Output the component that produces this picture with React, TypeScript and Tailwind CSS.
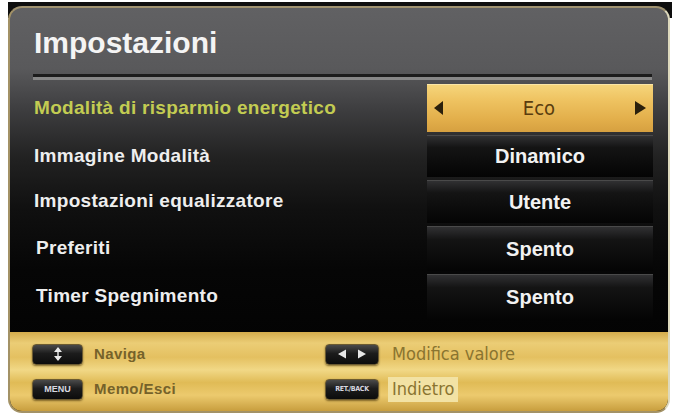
const sans = { fontFamily: '"Liberation Sans", Arial, sans-serif' };
const narrow = { fontFamily: '"DejaVu Sans Condensed", "DejaVu Sans", sans-serif', fontStretch: "condensed" };

const rows = [
  { label: "Modalità di risparmio energetico", value: "Eco", h: "h-[48px]", indent: "pl-[24px]", active: true },
  { label: "Immagine Modalità", value: "Dinamico", h: "h-[42px]", indent: "pl-[24px]" },
  { label: "Impostazioni equalizzatore", value: "Utente", h: "h-[43px]", indent: "pl-[24px]" },
  { label: "Preferiti", value: "Spento", h: "h-[45px]", indent: "pl-[26px]" },
  { label: "Timer Spegnimento", value: "Spento", h: "h-[45px]", indent: "pl-[26px]" },
];

function Key({ wide, children }: { wide?: boolean; children: React.ReactNode }) {
  return (
    <div
      className={`flex h-[21px] ${wide ? "w-[54px]" : "w-[51px]"} items-center justify-center rounded-[4px] border border-[#6b5a30] bg-[linear-gradient(#4a4a4a_0%,#1c1c1c_45%,#0c0c0c_100%)] shadow-[0_1px_2px_rgba(60,40,0,0.6)]`}
    >
      {children}
    </div>
  );
}

function Value({ text, active }: { text: string; active?: boolean }) {
  if (active) {
    return (
      <div className="flex h-full w-[226px] items-center justify-between bg-[linear-gradient(#f6d67c_0%,#eec260_35%,#e2ae4a_75%,#d6a040_100%)] px-[5px] shadow-[inset_0_1px_0_#fbe6a6]">
        <svg width="12" height="16" viewBox="0 0 12 16">
          <path d="M11 1 L2 8 L11 15 Z" fill="#2b200c" />
        </svg>
        <span className="text-[20px] leading-none text-[#5a3c0e]" style={narrow}>
          {text}
        </span>
        <svg width="14" height="16" viewBox="0 0 14 16">
          <path d="M1 1 L12 8 L1 15 Z" fill="#2b200c" />
        </svg>
      </div>
    );
  }
  return (
    <div className="flex h-full w-[226px] items-center justify-center bg-[linear-gradient(#333335_0%,#141414_30%,#040404_100%)] shadow-[inset_0_1px_0_#4a4a4a]">
      <span className="text-[20px] font-bold leading-none text-[#f2f2f2]" style={sans}>
        {text}
      </span>
    </div>
  );
}

export default function App() {
  return (
    <div className="h-[417px] w-[679px] bg-white pl-[8px] pt-[2px]">
      <div className="w-[664px] bg-[linear-gradient(#0e0e0e_0,#0e0e0e_16px,transparent_16px)] pr-[2px] pt-[4px]">
        <div className="flex h-[407px] w-[662px] flex-col overflow-hidden rounded-[14px] border-2 border-[#a39266] border-r-[#ddd9bd] border-t-[#a09270] bg-[linear-gradient(#616163_0%,#59595b_15%,#3e3e40_25%,#222222_37%,#101010_50%,#060606_65%,#000_100%)]">
          <h1 className="ml-[24px] mt-[20px] text-[30px] font-bold leading-[30px] text-[#f4f4f4]" style={sans}>
            Impostazioni
          </h1>
          <div className="ml-[23px] mt-[16px] w-[619px]">
            <div className="h-[3px] bg-[#1c1c1c]" />
            <div className="h-[3px] bg-[#878787]" />
          </div>
          <div className="mt-[4px] flex flex-col gap-[3px]">
            {rows.map((r) => (
              <div key={r.label} className={`flex ${r.h} items-center`}>
                <div
                  className={`flex-1 ${r.indent} text-[19px] font-bold tracking-[0.3px] ${r.active ? "text-[#c3cc52]" : "text-[#eeeeee]"}`}
                  style={sans}
                >
                  {r.label}
                </div>
                <div className="mr-[15px] h-full">
                  <Value text={r.value} active={r.active} />
                </div>
              </div>
            ))}
          </div>
          <div className="flex-1" />
          <div className="grid h-[79px] grid-cols-[293px_1fr] content-start gap-y-[11px] bg-[linear-gradient(#d4ac4c_0%,#ebcd76_14%,#e4c060_32%,#f1d886_48%,#e0bb56_64%,#ecca6e_80%,#c89e3e_100%)] pl-[22px] pt-[11px]">
            <div className="flex items-center gap-[11px]">
              <Key>
                <svg width="10" height="16" viewBox="0 0 10 16">
                  <path d="M5 1 L9 6 L1 6 Z M5 15 L9 10 L1 10 Z" fill="#e8e8e8" />
                  <rect x="4.3" y="6" width="1.4" height="4" fill="#e8e8e8" />
                </svg>
              </Key>
              <span className="text-[15px] font-bold tracking-[0.4px] text-[#75622a]" style={sans}>
                Naviga
              </span>
            </div>
            <div className="flex items-center gap-[13px]">
              <Key wide>
                <svg width="30" height="10" viewBox="0 0 30 10">
                  <path d="M1 5 L9 0.5 L9 9.5 Z M29 5 L21 0.5 L21 9.5 Z" fill="#e8e8e8" />
                </svg>
              </Key>
              <span className="text-[18px] leading-none text-[#8a7430]" style={narrow}>
                Modifica valore
              </span>
            </div>
            <div className="flex items-center gap-[11px]">
              <Key>
                <span className="text-[9px] font-bold leading-none text-[#d8d8e0]" style={sans}>
                  MENU
                </span>
              </Key>
              <span className="text-[15px] font-bold tracking-[0.4px] text-[#75622a]" style={sans}>
                Memo/Esci
              </span>
            </div>
            <div className="flex items-center gap-[9px]">
              <Key wide>
                <span className="text-[7px] font-bold leading-none tracking-[-0.3px] text-[#d8d8e0]" style={narrow}>
                  RET./BACK
                </span>
              </Key>
              <span
                className="flex h-[25px] items-center bg-[#f2e2a4] px-[4px] text-[18px] leading-none text-[#8a7430]"
                style={narrow}
              >
                Indietro
              </span>
            </div>
          </div>
        </div>
      </div>
    </div>
  );
}
